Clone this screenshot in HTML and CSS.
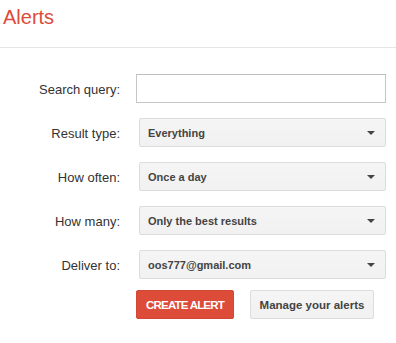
FILE: index.html
```
<!DOCTYPE html>
<html>
<head>
<meta charset="utf-8">
<link rel="stylesheet" href="styles.css">
</head>
<body>
<div class="header"><h1 class="title">Alerts</h1></div>
<div class="form">
  <div class="label">Search query:</div>
  <div class="input"></div>
  <div class="label">Result type:</div>
  <div class="select"><span>Everything</span><i class="arrow"></i></div>
  <div class="label">How often:</div>
  <div class="select"><span>Once a day</span><i class="arrow"></i></div>
  <div class="label">How many:</div>
  <div class="select"><span>Only the best results</span><i class="arrow"></i></div>
  <div class="label">Deliver to:</div>
  <div class="select"><span>oos777@gmail.com</span><i class="arrow"></i></div>
  <div></div>
  <div class="buttons">
    <div class="btn btn-red">CREATE ALERT</div>
    <div class="btn btn-grey">Manage your alerts</div>
  </div>
</div>
</body>
</html>
```
FILE: styles.css
```
html, body { margin: 0; padding: 0; background: #fff; }
body { font-family: Arial, "Liberation Sans", sans-serif; width: 396px; height: 343px; overflow: hidden; }
.header { height: 42px; padding: 5px 0 0 3px; border-bottom: 1px solid #e5e5e5; }
.title { margin: 0; font-size: 20px; line-height: 24px; font-weight: normal; color: #dd4b39; }
.form {
  margin-top: 26px;
  display: grid;
  grid-template-columns: 120px 250px;
  column-gap: 16px;
  row-gap: 15px;
  grid-auto-rows: 29px;
}
.label { font-size: 13px; color: #333; text-align: right; align-self: center; padding-top: 1px; }
.input { box-sizing: border-box; border: 1px solid #c6c6c6; border-top-color: #bdbdbd; background: #fff; height: 29px; }
.select {
  box-sizing: border-box; height: 29px; margin-left: 3px;
  border: 1px solid #dcdcdc; border-radius: 2px;
  background: linear-gradient(#f5f5f5, #f1f1f1);
  display: flex; align-items: center; justify-content: space-between;
  padding: 0 10px 0 8px;
  font-size: 11px; font-weight: bold; color: #444;
}
.arrow { width: 0; height: 0; border-left: 4px solid transparent; border-right: 4px solid transparent; border-top: 4px solid #444; margin-top: 1px; }
.buttons { display: flex; gap: 16px; margin-top: -4px; height: 29px; }
.btn {
  box-sizing: border-box; height: 29px; border-radius: 2px;
  display: flex; align-items: center; justify-content: center;
  font-size: 11px; font-weight: bold;
}
.btn-red { width: 98px; background: #dd4b39; border: 1px solid #d14836; color: #fff; font-size: 11.5px; letter-spacing: -0.8px; }
.btn-grey { width: 124px; background: linear-gradient(#f5f5f5, #f1f1f1); border: 1px solid #dcdcdc; color: #444; font-size: 11.5px; }
```
